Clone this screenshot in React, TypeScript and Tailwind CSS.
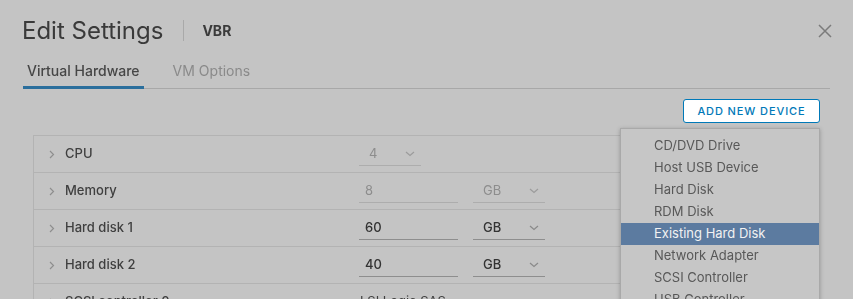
import React from "react";

type Row = {
  label: string;
  value: string;
  unit?: string;
  disabled?: boolean;
  select?: boolean;
  plain?: boolean;
};

const rows: Row[] = [
  { label: "CPU", value: "4", disabled: true, select: true },
  { label: "Memory", value: "8", unit: "GB", disabled: true },
  { label: "Hard disk 1", value: "60", unit: "GB" },
  { label: "Hard disk 2", value: "40", unit: "GB" },
  { label: "SCSI controller 0", value: "LSI Logic SAS", plain: true },
];

const devices = [
  "CD/DVD Drive",
  "Host USB Device",
  "Hard Disk",
  "RDM Disk",
  "Existing Hard Disk",
  "Network Adapter",
  "SCSI Controller",
  "USB Controller",
];

function ChevronRight() {
  return (
    <svg width="6" height="9" viewBox="0 0 6 9" className="text-[#8e8e8e]">
      <path d="M1 1l3.5 3.5L1 8" fill="none" stroke="currentColor" strokeWidth="1.2" />
    </svg>
  );
}

function ChevronDown({ light }: { light?: boolean }) {
  return (
    <svg width="10" height="6" viewBox="0 0 10 6" className={light ? "text-[#9c9c9c]" : "text-[#8a8a8a]"}>
      <path d="M1 1l4 3.5L9 1" fill="none" stroke="currentColor" strokeWidth="1.2" />
    </svg>
  );
}

function HardwareRow({ row }: { row: Row }) {
  const valueColor = row.disabled ? "text-[#8d8d8d]" : "text-[#333333] font-medium";
  const line = row.disabled ? "border-[#adadad]" : "border-[#8e8e8e]";
  return (
    <div className="flex h-[37px] items-center border-b border-[#b3b3b3]">
      <div className="flex w-[31px] justify-end pr-[10px]">
        <ChevronRight />
      </div>
      <div className="w-[294px] text-[13px] font-medium text-[#3f3f3f]">{row.label}</div>
      {row.plain ? (
        <div className="pl-px text-[13px] text-[#3f3f3f]">{row.value}</div>
      ) : row.select ? (
        <div className={`flex h-[24px] w-[62px] items-center justify-between border-b ${line} pl-[10px] pr-[6px]`}>
          <span className={`text-[13px] ${valueColor}`}>{row.value}</span>
          <ChevronDown light />
        </div>
      ) : (
        <>
          <div className={`flex h-[24px] w-[99px] items-center border-b ${line} pl-[6px]`}>
            <span className={`text-[13px] ${valueColor}`}>{row.value}</span>
          </div>
          <div className={`ml-[15px] flex h-[24px] w-[72px] items-center justify-between border-b ${line} pl-[10px] pr-[6px]`}>
            <span className={`text-[13px] ${valueColor}`}>{row.unit}</span>
            <ChevronDown light={row.disabled} />
          </div>
        </>
      )}
    </div>
  );
}

export default function App() {
  return (
    <div className="relative h-[299px] w-[853px] overflow-hidden bg-[#c4c4c4] font-['Inter',sans-serif]">
      <div className="pl-[22px] pr-[20px]">
        <div className="flex h-[60px] items-center pt-[1px] blur-[0.4px]">
          <h1 className="text-[24px] font-normal leading-none text-[#3a3a3a]">Edit Settings</h1>
          <div className="ml-[20px] h-[21px] w-px bg-[#a9a9a9]" />
          <span className="ml-[18px] text-[14px] font-bold text-[#3b3b3b]">VBR</span>
          <button className="ml-auto flex h-[16px] w-[16px] items-center justify-center">
            <svg width="14" height="14" viewBox="0 0 14 14" className="text-[#7b7b7b]">
              <path d="M1 1l12 12M13 1L1 13" stroke="currentColor" strokeWidth="1.5" />
            </svg>
          </button>
        </div>

        <div className="ml-px mr-[3px] flex border-b border-[#a8a8a8] blur-[0.4px]">
          <div className="-mb-px border-b-[3px] border-[#2a6e9c] px-[4px] pb-[5px] text-[14px] font-medium text-[#464646]">
            Virtual Hardware
          </div>
          <div className="ml-[25px] px-[4px] pb-[5px] text-[14px] text-[#8a8a8a]">VM Options</div>
        </div>

        <div className="mr-[13px] mt-[10px] flex justify-end">
          <button className="h-[24px] w-[137px] rounded-[3px] border border-[#0079b8] bg-white text-[11px] font-medium tracking-[0.9px] text-[#0079b8]">
            ADD NEW DEVICE
          </button>
        </div>

        <div className="ml-[11px] mr-[13px] mt-[12px] border-l border-t border-[#b3b3b3] blur-[0.4px]">
          {rows.map((r) => (
            <HardwareRow key={r.label} row={r} />
          ))}
        </div>
      </div>

      <div className="absolute left-[620px] top-[128px] w-[200px] border border-[#a9a9a9] bg-[#c6c6c6] pt-[6px] shadow-[0_1px_4px_rgba(0,0,0,0.25)]">
        {devices.map((d) =>
          d === "Existing Hard Disk" ? (
            <div key={d} className="flex h-[22px] items-center bg-[#5c7ba0] pl-[33px] text-[13px] text-[#f2f2f2]">
              {d}
            </div>
          ) : (
            <div key={d} className="flex h-[22px] items-center pl-[33px] text-[13px] text-[#585858] blur-[0.4px]">
              {d}
            </div>
          )
        )}
      </div>
    </div>
  );
}
